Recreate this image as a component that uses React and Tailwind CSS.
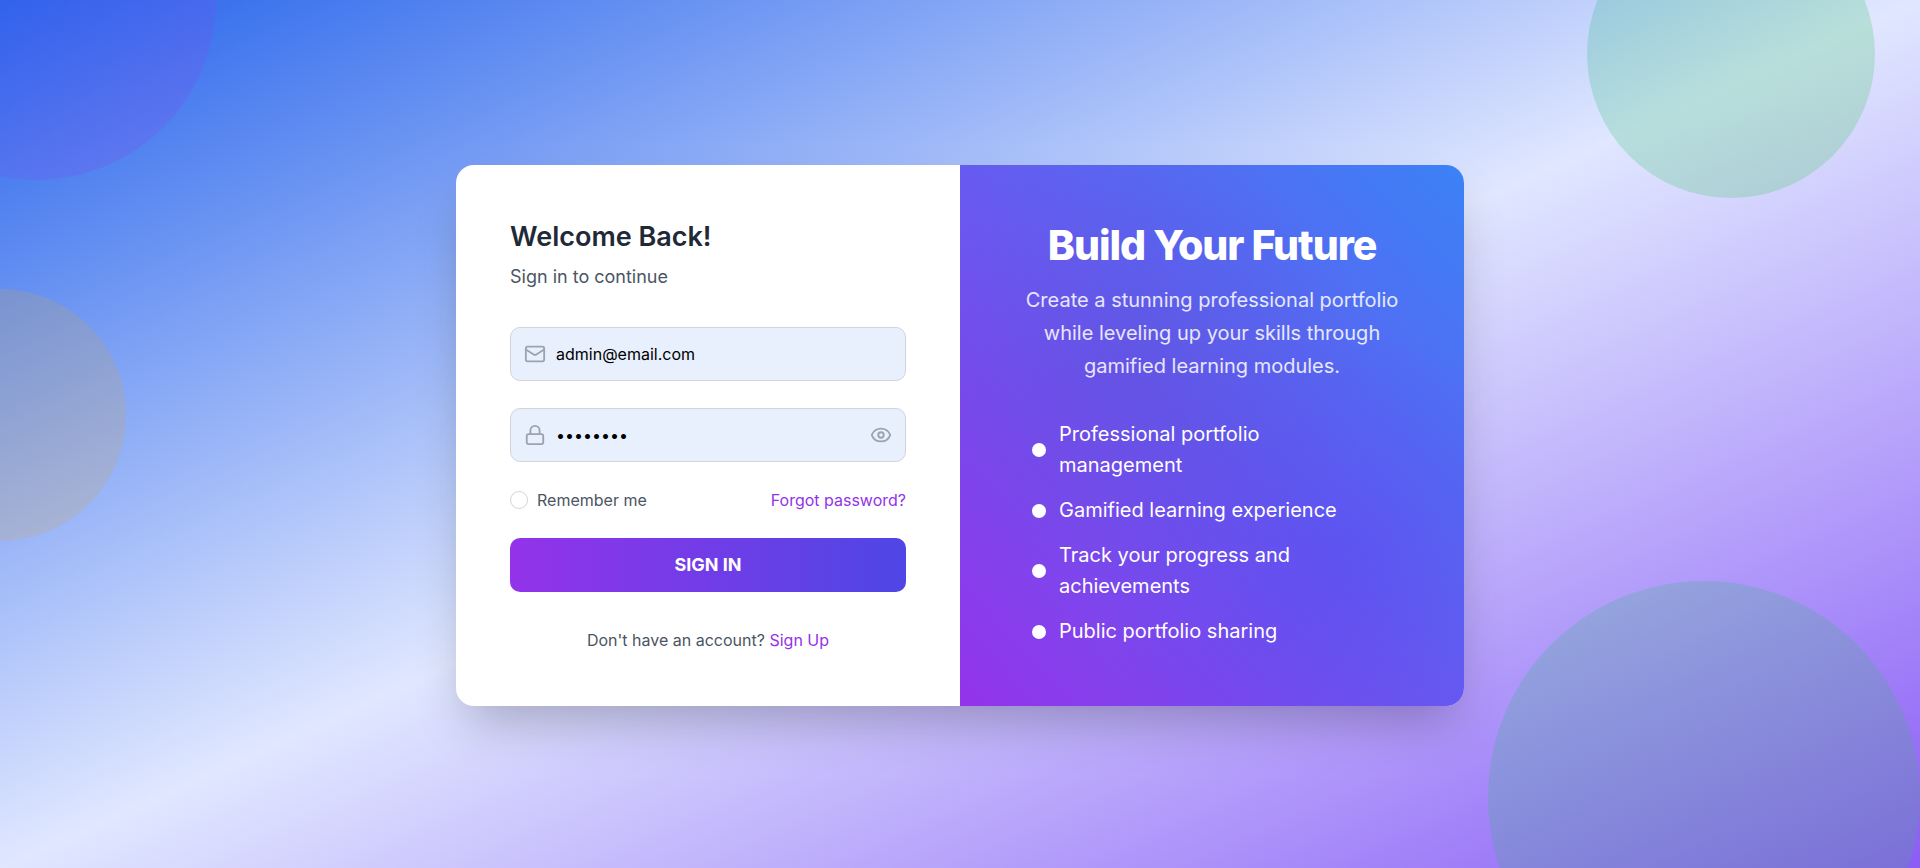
import { useState } from "react";
import { Eye, EyeOff, Lock, Mail } from "lucide-react";

const features = [
  "Professional portfolio management",
  "Gamified learning experience",
  "Track your progress and achievements",
  "Public portfolio sharing",
];

const fieldClass =
  "flex h-[54px] items-center gap-[10px] rounded-[10px] border border-[#d1d5db] bg-[#e8f0fe] px-[13px] text-[#9ca3af]";
const inputClass = "min-w-0 flex-1 bg-transparent text-[16px] leading-6 text-black outline-none";

export default function App() {
  const [email, setEmail] = useState("admin@email.com");
  const [password, setPassword] = useState("password");
  const [visible, setVisible] = useState(false);

  return (
    <div className="relative flex min-h-screen items-center justify-center overflow-hidden bg-[linear-gradient(to_bottom_right,#2563eb,#e0e7ff,#8b5cf6)] px-4 pt-0.5 font-['Inter',sans-serif]">
      <div className="absolute -top-[180px] -left-36 size-[360px] rounded-full bg-[linear-gradient(to_bottom_right,#3b82f6,#9333ea)] opacity-20" />
      <div className="absolute -top-[90px] right-[45px] size-72 rounded-full bg-[linear-gradient(to_bottom_right,#05af78,#22c62d)] opacity-20" />
      <div className="absolute top-1/3 -left-[126px] size-[252px] rounded-full bg-[#d1a350] opacity-20" />
      <div className="absolute right-0 -bottom-[145px] size-[432px] rounded-full bg-[linear-gradient(to_bottom_right,#12b870,#3fbd58)] opacity-20" />

      <main className="relative grid w-full max-w-[1008px] overflow-hidden rounded-[18px] bg-white shadow-[0_25px_50px_-12px_rgba(0,0,0,0.25)] md:grid-cols-2">
        <section className="flex flex-col justify-center p-[54px]">
          <h1 className="text-[27px] leading-9 font-semibold text-[#1f2937]">Welcome Back!</h1>
          <p className="mt-2 text-[18px] leading-7 text-[#4b5563]">Sign in to continue</p>

          <form className="mt-9" onSubmit={(e) => e.preventDefault()}>
            <div className={fieldClass}>
              <Mail size={22} aria-hidden="true" />
              <input type="email" aria-label="Email" value={email} onChange={(e) => setEmail(e.target.value)} className={inputClass} />
            </div>
            <div className="mt-[27px]">
              <div className={fieldClass}>
                <Lock size={22} aria-hidden="true" />
                <input type={visible ? "text" : "password"} aria-label="Password" value={password} onChange={(e) => setPassword(e.target.value)} className={inputClass} />
                <button type="button" aria-label="Show password" onClick={() => setVisible(!visible)}>
                  {visible ? <EyeOff size={22} /> : <Eye size={22} />}
                </button>
              </div>
            </div>

            <div className="mt-[27px] flex items-center justify-between text-[16px] leading-[22px]">
              <label className="flex items-center gap-[9px] text-[#4b5563]">
                <input type="checkbox" className="size-[18px] appearance-none rounded-full border border-[#d1d5db] bg-white checked:bg-[#9333ea]" />
                Remember me
              </label>
              <a href="#forgot" className="text-[#9333ea]">Forgot password?</a>
            </div>

            <button type="submit" className="mt-[27px] h-[54px] w-full rounded-[10px] bg-[linear-gradient(to_right,#9333ea,#4f46e5)] text-[18px] font-bold text-white">
              SIGN IN
            </button>
          </form>

          <p className="mt-9 text-center text-[16px] leading-6 text-[#4b5563]">
            Don't have an account? <a href="#signup" className="text-[#9333ea]">Sign Up</a>
          </p>
        </section>

        <section className="flex flex-col items-center justify-center bg-[radial-gradient(circle_at_36%_38%,rgba(80,65,190,0.22),transparent_50%),radial-gradient(circle_at_74%_72%,rgba(75,60,240,0.28),transparent_45%),linear-gradient(to_top_right,#9333ea,#3b82f6)] p-[54px] text-white">
          <h2 className="text-center text-[41px] leading-[45px] font-extrabold tracking-tight">Build Your Future</h2>
          <p className="mt-4 text-center text-[20px] leading-[33px] text-white/85">
            Create a stunning professional portfolio while leveling up your skills through gamified learning modules.
          </p>
          <ul className="mt-9 flex w-full max-w-[360px] flex-col gap-[14px] pr-4 text-[20px] leading-[31px]">
            {features.map((feature) => (
              <li key={feature} className="flex items-center gap-[13px]">
                <span className="size-[14px] shrink-0 rounded-full bg-white" />
                <span>{feature}</span>
              </li>
            ))}
          </ul>
        </section>
      </main>
    </div>
  );
}
